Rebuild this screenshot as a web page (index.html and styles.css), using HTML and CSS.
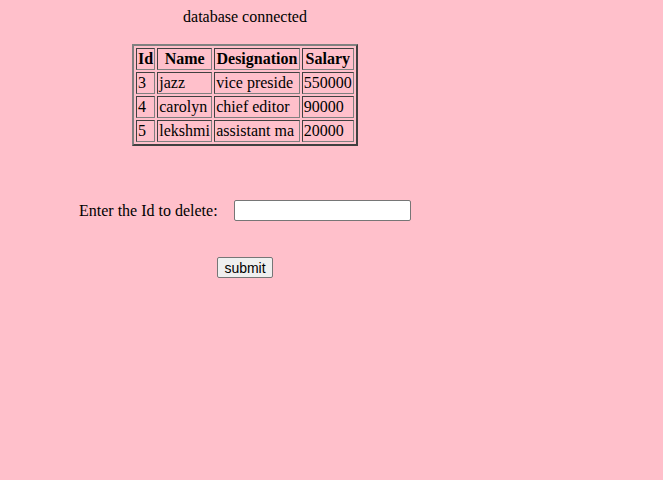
FILE: index.html
```html
<!DOCTYPE html>
<html>
<head>
<meta charset="utf-8">
<link rel="stylesheet" href="styles.css">
</head>
<body>
<div class="top">
  <div class="status">database connected</div>
  <table class="emp">
    <tr><th>Id</th><th>Name</th><th>Designation</th><th>Salary</th></tr>
    <tr><td>3</td><td>jazz</td><td>vice preside</td><td>550000</td></tr>
    <tr><td>4</td><td>carolyn</td><td>chief editor</td><td>90000</td></tr>
    <tr><td>5</td><td>lekshmi</td><td>assistant ma</td><td>20000</td></tr>
  </table>
</div>
<form class="del">
  <div class="row">
    <label class="lbl" for="id">Enter the Id to delete:</label>
    <input class="inp" id="id" type="text">
  </div>
  <div class="btnrow">
    <button class="btn" type="button">submit</button>
  </div>
</form>
</body>
</html>
```
FILE: styles.css
```css
html, body {
  background: #ffc0cb;
}
body {
  margin: 8px;
  font-family: "Liberation Serif", "Times New Roman", serif;
  font-size: 16px;
  color: #000;
}
.top {
  width: 474px;
  text-align: center;
}
.status {
  height: 18px;
  line-height: 18px;
  margin-bottom: 18px;
}
.emp {
  display: inline-table;
  width: 226px;
  border: 2px solid;
  border-color: #808080 #404040 #404040 #808080;
  border-spacing: 2px;
  text-align: left;
}
.emp th, .emp td {
  border: 1px solid;
  border-color: #404040 #808080 #808080 #404040;
  padding: 1px;
  line-height: 18px;
}
.emp th {
  text-align: center;
}
.del {
  margin-top: 54px;
}
.row {
  display: flex;
  align-items: center;
  padding-left: 71px;
}
.lbl {
  width: 155px;
}
.inp {
  box-sizing: border-box;
  width: 177px;
  height: 21px;
  padding: 1px 2px;
  border: 1px solid #767676;
  border-radius: 2px;
  background: #fff;
  font-size: 13.33px;
}
.btnrow {
  padding-left: 209px;
  margin-top: 36px;
}
.btn {
  box-sizing: border-box;
  font-family: "Liberation Sans", Arial, sans-serif;
  font-size: 14px;
  padding: 1px 6px;
  border: 1px solid #767676;
  border-radius: 2px;
  background: #efefef;
  color: #000;
  height: 21px;
  width: 56px;
}
```
